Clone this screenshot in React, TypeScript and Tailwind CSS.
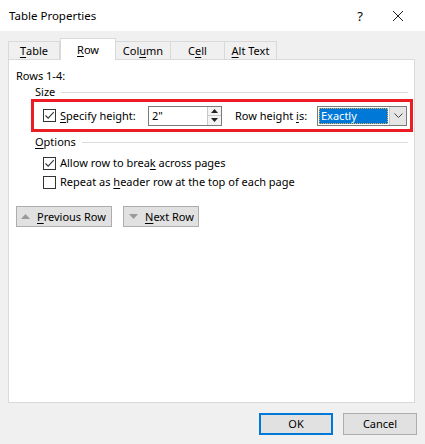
import React from "react";

function U({ children }: { children: React.ReactNode }) {
  return <span className="underline underline-offset-[2px] decoration-1">{children}</span>;
}

function CheckBox({ checked }: { checked?: boolean }) {
  return (
    <div className="w-[13px] h-[13px] border border-[#333333] bg-white flex items-center justify-center shrink-0">
      {checked && (
        <svg width="11" height="11" viewBox="0 0 11 11">
          <path d="M1.5 5.5 L4.2 8.2 L9.8 2.2" fill="none" stroke="#333333" strokeWidth="1.1" />
        </svg>
      )}
    </div>
  );
}

function Group({ label }: { label: React.ReactNode }) {
  return (
    <div className="flex items-center h-[16px] pl-[26px] pr-[6px] gap-[6px]">
      <span>{label}</span>
      <div className="flex-1 h-px bg-[#dcdcdc]" />
    </div>
  );
}

export default function App() {
  const tabs = [
    { label: <><U>T</U>able</>, w: "w-[52px]" },
    { label: <><U>R</U>ow</>, w: "w-[56px]", active: true },
    { label: <>Col<U>u</U>mn</>, w: "w-[56px]" },
    { label: <>C<U>e</U>ll</>, w: "w-[55px]" },
    { label: <><U>A</U>lt Text</>, w: "w-[53px]" },
  ];
  return (
    <div
      className="w-[425px] h-[444px] bg-[#f0f0f0] flex flex-col text-[11px] text-black leading-[16px] whitespace-nowrap"
      style={{ fontFamily: '"Noto Sans", "Segoe UI", sans-serif' }}
    >
      {/* title bar */}
      <div className="h-[31px] bg-white flex items-center pl-[9px] shrink-0">
        <span className="flex-1 text-[11.5px]">Table Properties</span>
        <span className="w-[20px] text-center mr-[22px] text-[13px]">?</span>
        <svg width="12" height="12" viewBox="0 0 12 12" className="mr-[21px]">
          <path d="M1 1 L11 11 M11 1 L1 11" stroke="#222" strokeWidth="1" />
        </svg>
      </div>

      {/* tabs */}
      <div className="flex items-end pl-[8px] pt-[7px] h-[28px] shrink-0">
        {tabs.map((t, i) =>
          t.active ? (
            <div
              key={i}
              className={`${t.w} h-[22px] bg-white border border-b-0 border-[#d9d9d9] flex items-center justify-center mb-[-1px] relative z-10`}
            >
              {t.label}
            </div>
          ) : (
            <div
              key={i}
              className={`${t.w} h-[18px] border border-b-0 border-[#d9d9d9] -ml-px first:ml-0 flex items-center justify-center`}
            >
              {t.label}
            </div>
          )
        )}
      </div>

      {/* panel */}
      <div className="ml-[8px] w-[407px] h-[344px] bg-white border border-[#d9d9d9] shrink-0 flex flex-col pt-[8px]">
        <div className="pl-[7px] h-[16px]">Rows 1-4:</div>
        <Group label="Size" />

        <div className="mt-[-1px] ml-[22px] w-[382px] h-[33px] border-[3px] border-[#ec1c24] flex items-center pl-[9px]">
          <CheckBox checked />
          <span className="w-[92px] pl-[4px]">
            <U>S</U>pecify height:
          </span>
          <div className="w-[74px] h-[20px] border border-[#7a7a7a] flex">
            <span className="flex-1 pl-[3px] leading-[18px]">2"</span>
            <div className="w-[14px] border-l border-[#c9c9c9] flex flex-col bg-[#f3f3f3]">
              <div className="flex-1 flex items-center justify-center border-b border-[#c9c9c9]">
                <svg width="7" height="4" viewBox="0 0 7 4">
                  <path d="M0 4 L3.5 0 L7 4 Z" fill="#222" />
                </svg>
              </div>
              <div className="flex-1 flex items-center justify-center">
                <svg width="7" height="4" viewBox="0 0 7 4">
                  <path d="M0 0 L3.5 4 L7 0 Z" fill="#222" />
                </svg>
              </div>
            </div>
          </div>
          <span className="w-[95px] pl-[13px]">
            Row height <U>i</U>s:
          </span>
          <div className="w-[90px] h-[20px] border border-[#7a7a7a] flex">
            <div className="flex-1 p-[1px]">
              <div className="h-full bg-[#0078d7] text-white border border-dotted border-[#e0b050] pl-[1px] leading-[14px]">
                Exactly
              </div>
            </div>
            <div className="w-[17px] bg-[#e5e5e5] border-l border-[#c9c9c9] flex items-center justify-center">
              <svg width="9" height="5" viewBox="0 0 9 5">
                <path d="M0.5 0.5 L4.5 4.5 L8.5 0.5" fill="none" stroke="#444" strokeWidth="1" />
              </svg>
            </div>
          </div>
        </div>

        <div className="mt-[2px]">
          <Group label={<><U>O</U>ptions</>} />
        </div>

        <div className="mt-[5px] flex items-center h-[16px] pl-[34px] gap-[4px]">
          <CheckBox checked />
          <span>
            Allow row to brea<U>k</U> across pages
          </span>
        </div>
        <div className="mt-[3px] flex items-center h-[16px] pl-[34px] gap-[4px]">
          <CheckBox />
          <span>
            Repeat as <U>h</U>eader row at the top of each page
          </span>
        </div>

        <div className="mt-[16px] pl-[7px] flex gap-[11px]">
          <div className="w-[96px] h-[21px] bg-[#e1e1e1] border border-[#adadad] flex items-center pl-[4px] gap-[7px]">
            <svg width="9" height="5" viewBox="0 0 9 5">
              <path d="M0 5 L4.5 0 L9 5 Z" fill="#9a9a9a" />
            </svg>
            <span>
              <U>P</U>revious Row
            </span>
          </div>
          <div className="w-[76px] h-[21px] bg-[#e1e1e1] border border-[#adadad] flex items-center pl-[5px] gap-[7px]">
            <svg width="9" height="5" viewBox="0 0 9 5">
              <path d="M0 0 L4.5 5 L9 0 Z" fill="#9a9a9a" />
            </svg>
            <span>
              <U>N</U>ext Row
            </span>
          </div>
        </div>
      </div>

      {/* bottom buttons */}
      <div className="mt-[10px] flex pl-[259px] gap-[10px]">
        <div className="w-[74px] h-[22px] bg-[#e1e1e1] border-2 border-[#0078d7] flex items-center justify-center">
          OK
        </div>
        <div className="w-[74px] h-[22px] bg-[#e1e1e1] border border-[#adadad] flex items-center justify-center">
          Cancel
        </div>
      </div>
    </div>
  );
}
